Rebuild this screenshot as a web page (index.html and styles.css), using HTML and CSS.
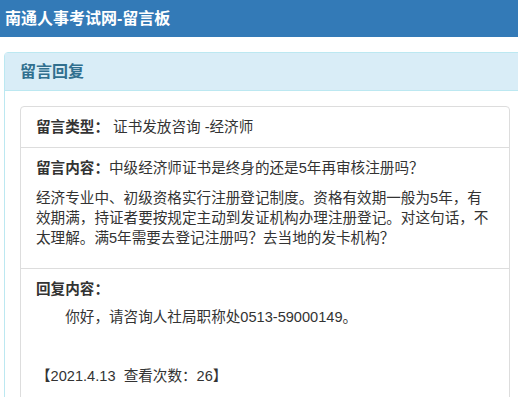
FILE: index.html
```html
<!DOCTYPE html>
<html lang="zh-CN">
<head>
  <meta charset="UTF-8">
  <meta name="viewport" content="width=device-width, initial-scale=1.0">
  <title>南通人事考试网-留言板</title>
  <link rel="stylesheet" href="styles.css">
</head>
<body>

  <div class="topbar">南通人事考试网-留言板</div>

  <div class="main">
    <div class="panel">
      <div class="panel-heading">留言回复</div>
      <div class="panel-body">
        <ul class="list-group">
          <li class="list-item">
            <b>留言类型：</b> 证书发放咨询 -经济师
          </li>
          <li class="list-item">
            <p class="item-title"><b>留言内容：</b>中级经济师证书是终身的还是5年再审核注册吗？</p>
            <p>经济专业中、初级资格实行注册登记制度。资格有效期一般为5年，有效期满，持证者要按规定主动到发证机构办理注册登记。对这句话，不太理解。满5年需要去登记注册吗？去当地的发卡机构？</p>
          </li>
          <li class="list-item">
            <p class="item-title reply-title"><b>回复内容：</b></p>
            <p class="reply">你好，请咨询人社局职称处0513-59000149。</p>
            <p class="meta">【2021.4.13&nbsp; 查看次数：26】</p>
          </li>
        </ul>
      </div>
    </div>
  </div>

</body>
</html>
```

FILE: styles.css
```css
html, body {
  overflow: hidden;
}
body {
  margin: 0;
  font-family: "Liberation Sans", Arial, "Noto Sans CJK SC", sans-serif;
  font-size: 14.6px;
  line-height: 20px;
  color: #333;
  background-color: #fff;
}
.topbar {
  height: 37px;
  line-height: 37px;
  padding-left: 5px;
  background-color: #337ab7;
  color: #fff;
  font-size: 16px;
  font-weight: bold;
}
.main {
  padding: 15px 0 0 4px;
}
.panel {
  width: 520px;
  border: 1px solid #bce8f1;
  border-radius: 4px;
}
.panel-heading {
  padding: 10px 15px;
  background-color: #d9edf7;
  border-bottom: 1px solid #bce8f1;
  color: #31708f;
  font-size: 16px;
  font-weight: bold;
  line-height: 17px;
}
.panel-body {
  padding: 15px;
}
.list-group {
  list-style: none;
  margin: 0;
  padding: 0;
  border: 1px solid #ddd;
  border-radius: 4px;
}
.list-item {
  padding: 10px 15px;
  border-top: 1px solid #ddd;
}
.list-item:first-child {
  border-top: none;
}
.list-item p {
  margin: 0 0 10px;
}
.list-item .reply-title {
  margin-bottom: 8px;
}
.reply {
  text-indent: 2em;
}
.list-item .meta {
  margin-top: 39px;
}
```
